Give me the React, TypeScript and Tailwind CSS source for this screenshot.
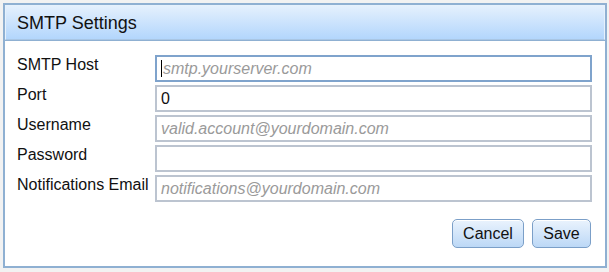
const fields = [
  { label: "SMTP Host", placeholder: "smtp.yourserver.com", value: "", focused: true },
  { label: "Port", placeholder: "", value: "0" },
  { label: "Username", placeholder: "valid.account@yourdomain.com", value: "" },
  { label: "Password", placeholder: "", value: "" },
  { label: "Notifications Email", placeholder: "notifications@yourdomain.com", value: "" },
];

export default function App() {
  return (
    <div className="w-[609px] h-[272px] bg-[#f2f2f2] p-[3px] pr-[2px] font-['Liberation_Sans',Arial,sans-serif]">
      <div className="h-[265px] border-2 border-[#8fb0d2] bg-white flex flex-col">
        <div className="h-[35px] border border-[#e6f1fc] border-b-[#a9c6e4] bg-gradient-to-b from-[#e4f0fd] to-[#b3d6fc] flex items-center pl-[11px] pt-[1px] text-[18px] text-[#111]">
          SMTP Settings
        </div>
        <div className="border-t border-[#8fb0d2] flex-1 pl-[12px] pr-[13px] pt-[14px] flex flex-col">
          <div className="flex flex-col gap-[3px]">
            {fields.map((f) => (
              <div key={f.label} className="flex items-start h-[27px]">
                <div className="w-[138px] text-[16px] leading-[18px] pt-[1px] text-[#111] whitespace-nowrap">
                  {f.label}
                </div>
                <div
                  className={
                    "flex-1 h-[27px] border-2 flex items-center pl-[4px] text-[16px] " +
                    (f.focused ? "border-[#7fa3cc]" : "border-[#bcc4d0]")
                  }
                >
                  {f.focused && <span className="w-px h-[17px] bg-black mr-[1px]" />}
                  {f.value ? (
                    <span className="text-[#111]">{f.value}</span>
                  ) : (
                    <span className="italic text-[#9a9a9a]">{f.placeholder}</span>
                  )}
                </div>
              </div>
            ))}
          </div>
          <div className="flex justify-end gap-[8px] mt-[17px] pr-[1px]">
            <button className="w-[72px] h-[29px] rounded-[5px] border border-[#7b9fc8] bg-gradient-to-b from-[#eaf3fd] to-[#bcd8f6] text-[16px] text-[#111] shadow-[inset_0_1px_0_#fff]">
              Cancel
            </button>
            <button className="w-[59px] h-[29px] rounded-[5px] border border-[#7b9fc8] bg-gradient-to-b from-[#eaf3fd] to-[#bcd8f6] text-[16px] text-[#111] shadow-[inset_0_1px_0_#fff]">
              Save
            </button>
          </div>
        </div>
      </div>
    </div>
  );
}
